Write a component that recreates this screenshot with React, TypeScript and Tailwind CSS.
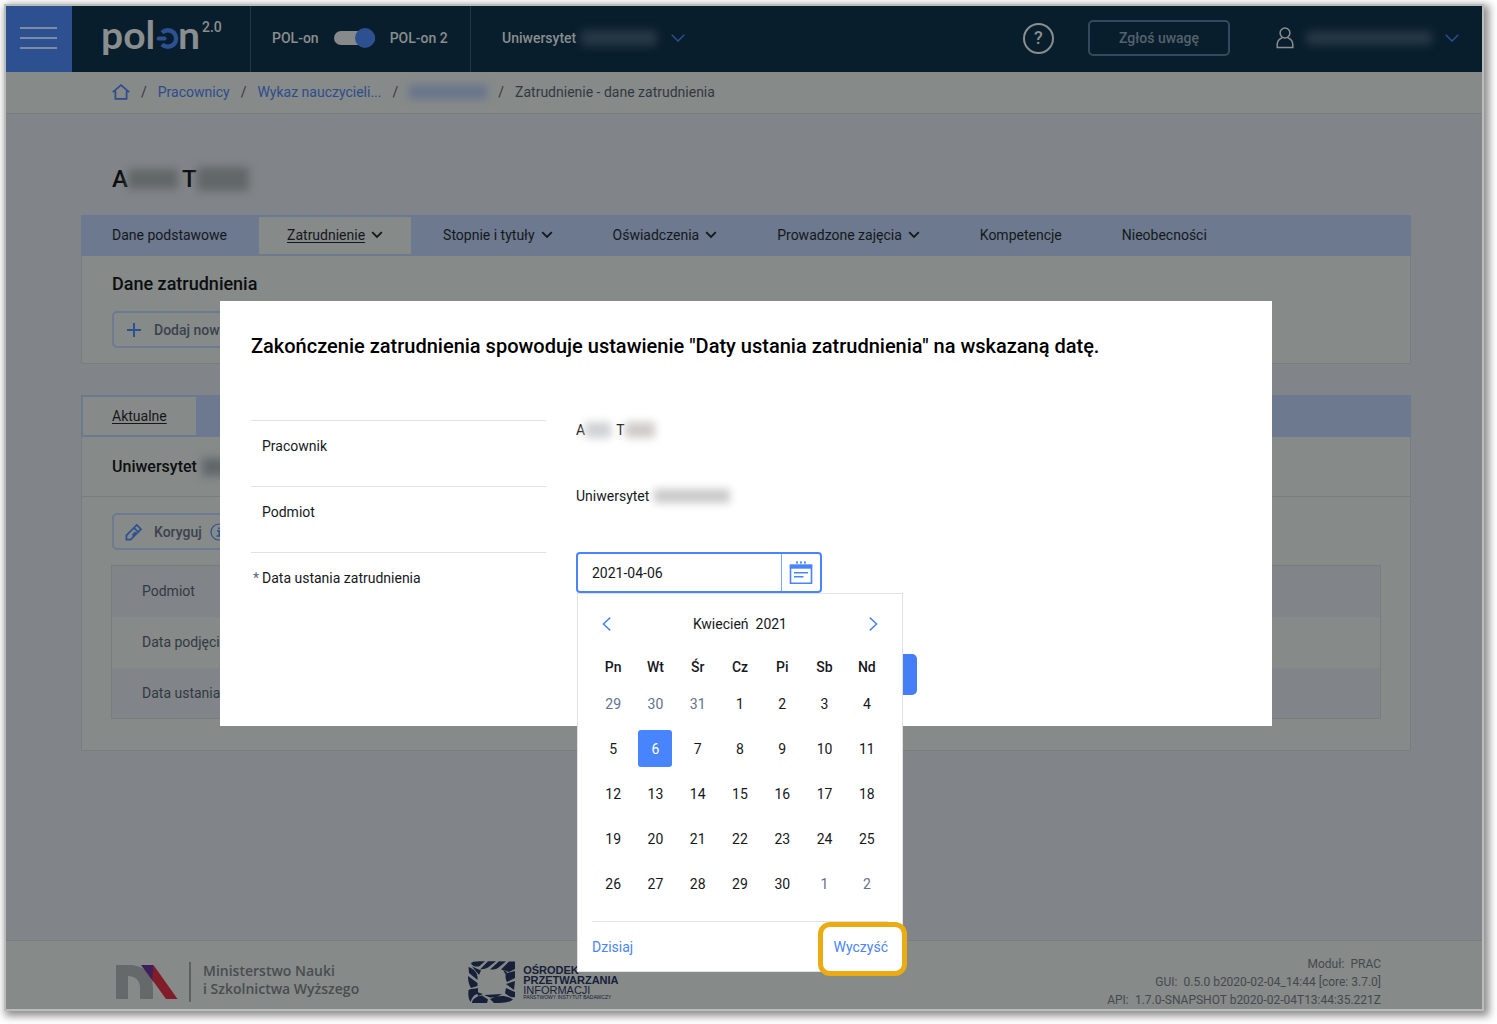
import { useState } from 'react';
import clsx from 'clsx';

const tabs = [
  { label: 'Dane podstawowe', menu: false },
  { label: 'Zatrudnienie', menu: true },
  { label: 'Stopnie i tytuły', menu: true },
  { label: 'Oświadczenia', menu: true },
  { label: 'Prowadzone zajęcia', menu: true },
  { label: 'Kompetencje', menu: false },
  { label: 'Nieobecności', menu: false },
];

const weekDays = ['Pn', 'Wt', 'Śr', 'Cz', 'Pi', 'Sb', 'Nd'];

// April 2021 starts on a Thursday, so three days of March come first
const days = Array.from({ length: 35 }, (_, i) => {
  const n = i - 2;
  if (n < 1) return { day: 31 + n, outside: true };
  if (n > 30) return { day: n - 30, outside: true };
  return { day: n, outside: false };
});

const weeks = [0, 1, 2, 3, 4].map((w) => days.slice(w * 7, w * 7 + 7));

const detailRows = ['Podmiot', 'Data podjęcia', 'Data ustania'];

function Chevron({ className }: { className?: string }) {
  return (
    <svg viewBox="0 0 14 8" className={clsx('h-2 w-[14px] shrink-0', className)} fill="none" stroke="currentColor">
      <path d="M0.7 0.7 7 7 13.3 0.7" strokeWidth="1.4" />
    </svg>
  );
}

function Redacted({ className }: { className?: string }) {
  return <span aria-hidden="true" className={clsx('inline-block shrink-0 blur-[4px]', className)} />;
}

function PolonLogo() {
  return (
    <svg viewBox="-4 -6 128 60" className="h-[60px] w-32" role="img" aria-label="POL-on 2.0">
      <text x="-2" y="35" fontFamily="Lato, sans-serif" fontWeight="700" fontSize="39" fill="#8a8e8f">pol</text>
      <path d="M59 18.6A8.3 8.3 0 1 1 59 30.4" fill="none" stroke="#2d5091" strokeWidth="4.4" />
      <path d="M55.6 24.5H61.5" stroke="#2d5091" strokeWidth="4" strokeLinecap="round" />
      <text x="75" y="35" fontFamily="Lato, sans-serif" fontWeight="700" fontSize="39" fill="#8a8e8f">n</text>
      <text x="99" y="18" fontFamily="Roboto, sans-serif" fontWeight="500" fontSize="14" fill="#8a8e8f">2.0</text>
    </svg>
  );
}

function Header() {
  return (
    <header className="flex h-[66px] items-stretch bg-[#091e2d] font-medium text-[#8a8e8f]">
      <button type="button" aria-label="Menu" className="flex w-[66px] flex-col items-center justify-center gap-[8px] bg-[#2d5091] pr-[2px] pb-[2px]">
        <span className="h-[2px] w-[37px] bg-[#7d8ba5]" />
        <span className="h-[2px] w-[37px] bg-[#7d8ba5]" />
        <span className="h-[2px] w-[37px] bg-[#7d8ba5]" />
      </button>
      <div className="flex w-[179px] items-center border-r border-[#233644] pb-[2px] pl-[27px]">
        <PolonLogo />
      </div>
      <div className="flex w-[220px] items-center gap-[15px] border-r border-[#233644] pb-[2px] pl-[21px]">
        <span>POL-on</span>
        <button type="button" role="switch" aria-checked="true" aria-label="Wersja systemu" className="flex h-[14px] w-[41px] items-center justify-end rounded-full bg-[#868a8b]">
          <span className="size-5 rounded-full bg-[#2d5091]" />
        </button>
        <span>POL-on 2</span>
      </div>
      <button type="button" className="flex items-center pb-[2px] pl-[31px]">
        Uniwersytet
        <Redacted className="ml-[5px] h-4 w-[76px] rounded-sm bg-[#263844]" />
        <Chevron className="ml-[14px] text-[#2d5091]" />
      </button>
      <div className="ml-auto flex items-center pr-[23px] pb-[2px]">
        <button type="button" aria-label="Pomoc" className="size-[31px] rounded-full border-2 border-[#8a8e8f] text-lg leading-none">
          ?
        </button>
        <button type="button" className="ml-[34px] h-9 w-[142px] rounded-[5px] border-2 border-[#35485d] text-[#55626c]">
          Zgłoś uwagę
        </button>
        <button type="button" aria-label="Konto" className="ml-[46px] flex items-center">
          <svg viewBox="0 0 18 22" className="h-[22px] w-[18px]" fill="none" stroke="currentColor" strokeWidth="1.5">
            <circle cx="9" cy="6" r="4.9" />
            <path d="M1.2 20.6V17.5C1.2 14 4 11.6 6.4 10.6M11.6 10.6C14 11.6 16.8 14 16.8 17.5V20.6H0.5" />
          </svg>
          <Redacted className="ml-[12px] h-[14px] w-[126px] rounded-sm bg-[#263844]" />
          <Chevron className="ml-[13px] text-[#2d5091]" />
        </button>
      </div>
    </header>
  );
}

function Breadcrumbs() {
  return (
    <nav aria-label="Okruszki" className="flex h-[42px] items-center gap-[11px] border-b border-[#797d80] bg-[#868a89] pb-[2px] pl-[106px] text-[#32383f]">
      <a href="#" aria-label="Strona główna" className="text-[#2d4c8c]">
        <svg viewBox="0 0 18 16" className="h-4 w-[18px]" fill="none" stroke="currentColor" strokeWidth="1.7">
          <path d="M0.8 8.2 9 1.2 17.2 8.2M3.4 7V14.8H14.6V7" />
        </svg>
      </a>
      <span>/</span>
      <a href="#" className="text-[#2d4c8c]">Pracownicy</a>
      <span>/</span>
      <a href="#" className="text-[#2d4c8c]">Wykaz nauczycieli...</a>
      <span>/</span>
      <Redacted className="h-[14px] w-[78px] bg-[#68748c]" />
      <span>/</span>
      <span>Zatrudnienie - dane zatrudnienia</span>
    </nav>
  );
}

function TabBar() {
  return (
    <div role="tablist" className="flex h-[41px] bg-[#6c798e] pl-px text-[#15181b]">
      {tabs.map((tab) => {
        const active = tab.label === 'Zatrudnienie';
        return (
          <button
            key={tab.label}
            type="button"
            role="tab"
            aria-selected={active}
            className={clsx('flex items-center gap-[6px] border-2 border-[#6c798e] px-[28px] pb-[2px]', active && 'bg-[#868a89]')}
          >
            <span className={clsx(active && 'underline underline-offset-2')}>{tab.label}</span>
            {tab.menu && (
              <svg viewBox="0 0 12 8" className="h-2 w-3" fill="none" stroke="currentColor" strokeWidth="1.8">
                <path d="M1.2 1.2 6 6 10.8 1.2" />
              </svg>
            )}
          </button>
        );
      })}
    </div>
  );
}

function Employment() {
  return (
    <main className="flex-1 pt-[51px] pr-[71px] pl-[75px]">
      <h1 className="flex h-7 items-center pl-[31px] text-2xl font-medium text-[#0c0e10]">
        A
        <Redacted className="h-5 w-[50px] bg-[#62676a]" />
        <span className="ml-[4px]">T</span>
        <Redacted className="h-6 w-[52px] bg-[#62676a]" />
      </h1>

      <section className="mt-[22px]">
        <TabBar />
        <div className="h-[108px] border border-t-0 border-[#797d80] bg-[#868a89] px-[30px] pt-[16px]">
          <h2 className="text-lg leading-6 font-medium text-[#0c0e10]">Dane zatrudnienia</h2>
          <button type="button" className="mt-[15px] flex h-[37px] w-[190px] items-center gap-[12px] rounded-[5px] border-2 border-[#6d7a91] pl-[12px] font-medium text-[#3a434d]">
            <svg viewBox="0 0 16 16" className="size-4 shrink-0" stroke="#2d5091" strokeWidth="2">
              <path d="M8 1V15M1 8H15" />
            </svg>
            Dodaj nowe
          </button>
        </div>
      </section>

      <section className="mt-[31px]">
        <div role="tablist" className="flex h-[42px] bg-[#6c798e] text-[#15181b]">
          <button type="button" role="tab" aria-selected="true" className="border-2 border-[#6c798e] bg-[#868a89] px-[29px] underline underline-offset-2">
            Aktualne
          </button>
        </div>
        <div className="border border-t-0 border-[#797d80] bg-[#868a89] pb-[31px]">
          <h3 className="flex h-[60px] items-center border-b border-[#797d80] pl-[30px] text-base font-medium text-[#0c0e10]">
            Uniwersytet
            <Redacted className="ml-[5px] h-[18px] w-20 bg-[#62676a]" />
          </h3>
          <div className="px-[29px] pt-[16px]">
            <button type="button" className="ml-px flex h-[37px] w-[136px] items-center rounded-[5px] border-2 border-[#6d7a91] pl-[11px] font-medium text-[#3a434d]">
              <svg viewBox="0 0 18 18" className="size-[18px] shrink-0" fill="none" stroke="#2d5091" strokeWidth="1.7">
                <path d="M1.4 16.6V12.4L11.8 2 16 6.2 5.6 16.6ZM9 4.8 13.2 9M10.6 9.2 7.4 12.4" />
              </svg>
              <span className="ml-[11px]">Koryguj</span>
              <svg viewBox="0 0 18 18" className="ml-[8px] size-[18px] shrink-0" fill="none" stroke="#2d5091">
                <circle cx="9" cy="9" r="8" strokeWidth="1.2" />
                <path d="M9 4.5V6.2M7 8H9.4V13M6.6 13H11.8" strokeWidth="1.7" />
              </svg>
            </button>
            <table className="mt-[15px] w-full border-collapse border border-[#797d80] text-left text-[#323941]">
              <tbody>
                {detailRows.map((row) => (
                  <tr key={row} className="h-[51px] odd:bg-[#818589]">
                    <th scope="row" className="px-[30px] py-0 font-normal">{row}</th>
                  </tr>
                ))}
              </tbody>
            </table>
          </div>
        </div>
      </section>
    </main>
  );
}

function Footer() {
  return (
    <footer className="flex items-start border-t border-[#797d80] bg-[#868a89] pr-[101px] pl-[110px]">
      <div className="flex items-center pt-[21px]">
        <svg viewBox="0 0 62 34" className="h-[34px] w-[62px]" aria-hidden="true">
          <path d="M0 0H13C28 0 37 9 37 23V34H24V23C24 15 19 11 12 11V34H0Z" fill="#656969" />
          <path d="M25 0H37.5V17Z" fill="#3e1f58" />
          <path d="M37.5 0 61.5 34H50L36 14.5Z" fill="#801d28" />
        </svg>
        <div className="ml-[11px] border-l-2 border-[#5b6061] pb-[4px] pl-[12px] font-[Open_Sans,sans-serif] leading-[18px] font-semibold text-[#484d4e]">
          Ministerstwo Nauki
          <br />
          i Szkolnictwa Wyższego
        </div>
      </div>
      <div className="ml-[109px] flex items-start gap-[8px] pt-[20px] text-[#172038]">
        <svg viewBox="0 0 47 42" className="h-[42px] w-[47px]" fill="currentColor" aria-hidden="true">
          <path d="M3 2C6 0 12 0.5 17 0.3L11 5.5C7 6 4 5 3 2ZM20 0.3H28L20 6.5C17 8.5 14 8 12 8.5ZM31 0.3 38 0.5 30 7C27 9 24 8.5 22 8.5ZM41 0.5H47V8L41 11C36 9 34 9 33 8.5Z" />
          <path d="M47 10V17L39 21C37 17 37 13 39 12ZM47 20 46 29 38 23ZM47 31V36C43 37 39 34 37 32L38 27Z" />
          <path d="M45 38.5C41 42 33 42 26 42L22 38C30 34 38 34 45 38.5ZM19 42H4C4 38 9 35 14 34.5L20 38.5ZM16 34 34 33C31 35.5 26 36.5 22 36.5Z" />
          <path d="M0.5 6C6 8 9 11 9.5 16V19L1 12ZM0 15 9.5 22V25L3 27C1 24 0 20 0 15ZM0.5 29C4 27 7 28 10 27V33C6 33 4 37 2.5 41C0.5 38 0 34 0.5 29Z" />
          <path d="M4 5.5 13 9.5 11 14ZM9 31 15 33 10 35ZM35 9 39 11 38 14Z" />
        </svg>
        <div className="pt-[4px] font-[Liberation_Sans,sans-serif] text-[11px] leading-[10px]">
          <div className="font-bold">OŚRODEK</div>
          <div className="font-bold">PRZETWARZANIA</div>
          <div>INFORMACJI</div>
          <div className="text-[5px] leading-[5px]">PAŃSTWOWY INSTYTUT BADAWCZY</div>
        </div>
      </div>
      <div className="ml-auto pt-[14px] text-right text-xs leading-[18px] text-[#44494d]">
        <div>Moduł:&ensp;PRAC</div>
        <div>GUI:&ensp;0.5.0 b2020-02-04_14:44 [core: 3.7.0]</div>
        <div>API:&ensp;1.7.0-SNAPSHOT b2020-02-04T13:44:35.221Z</div>
      </div>
    </footer>
  );
}

interface CalendarProps {
  selected: number | null;
  onSelect: (day: number | null) => void;
}

function Calendar({ selected, onSelect }: CalendarProps) {
  return (
    <div className="w-[326px] border border-[#e2e2e4] bg-white px-[14px]">
      <div className="flex h-[59px] items-center justify-between px-[10px]">
        <button type="button" aria-label="Poprzedni miesiąc" className="text-[#4984ff]">
          <svg viewBox="0 0 9 14" className="h-[14px] w-[9px]" fill="none" stroke="currentColor" strokeWidth="1.5">
            <path d="M8.2 0.6 1.4 7 8.2 13.4" />
          </svg>
        </button>
        <span>Kwiecień&nbsp; 2021</span>
        <button type="button" aria-label="Następny miesiąc" className="text-[#4984ff]">
          <svg viewBox="0 0 9 14" className="h-[14px] w-[9px]" fill="none" stroke="currentColor" strokeWidth="1.5">
            <path d="M0.8 0.6 7.6 7 0.8 13.4" />
          </svg>
        </button>
      </div>
      <table className="w-full table-fixed text-center">
        <thead>
          <tr className="h-[28px]">
            {weekDays.map((d) => (
              <th key={d} scope="col" className="p-0 font-medium">{d}</th>
            ))}
          </tr>
        </thead>
        <tbody>
          {weeks.map((week, i) => (
            <tr key={i} className="h-[45px]">
              {week.map(({ day, outside }) => (
                <td key={day} className="p-0">
                  <button
                    type="button"
                    onClick={() => onSelect(day)}
                    className={clsx(
                      'h-[37px] w-[34px] rounded-[3px]',
                      outside && 'text-[#65718a]',
                      !outside && day === selected && 'bg-[#4984ff] text-white'
                    )}
                  >
                    {day}
                  </button>
                </td>
              ))}
            </tr>
          ))}
        </tbody>
      </table>
      <div className="mt-[15px] flex h-[50px] items-center justify-between border-t border-[#e2e2e4] text-[#4984ff]">
        <button type="button">Dzisiaj</button>
        <div className="relative">
          <button type="button" onClick={() => onSelect(null)}>Wyczyść</button>
          <span className="pointer-events-none absolute -top-[15px] -right-[19px] -bottom-[19px] -left-[16px] rounded-[12px] border-[5px] border-[#ebab13]" />
        </div>
      </div>
    </div>
  );
}

function EndEmploymentDialog() {
  const [day, setDay] = useState<number | null>(6);
  const value = day === null ? '' : `2021-04-${String(day).padStart(2, '0')}`;

  return (
    <div className="absolute inset-0 flex items-start justify-center pt-[295px] pl-[4px]">
      <div role="dialog" aria-labelledby="dialog-title" className="w-full max-w-[1052px] bg-white px-[31px] pt-[30px] pb-[31px] text-[#16181c]">
        <h2 id="dialog-title" className="text-xl leading-[30px] font-medium text-black">
          Zakończenie zatrudnienia spowoduje ustawienie "Daty ustania zatrudnienia" na wskazaną datę.
        </h2>
        <div className="mt-[59px] grid grid-cols-[295px_1fr] gap-x-[30px] leading-5">
          <div className="h-[66px] border-t border-[#e2e2e4] pt-[15px] pl-[11px]">Pracownik</div>
          <div className="flex h-5 items-center">
            A
            <Redacted className="h-4 w-[26px] bg-[#cfd1d2]" />
            <span className="ml-[5px]">T</span>
            <Redacted className="h-4 w-[30px] bg-[#cfcbca]" />
          </div>
          <div className="h-[66px] border-t border-[#e2e2e4] pt-[15px] pl-[11px]">Podmiot</div>
          <div className="flex h-5 items-center">
            Uniwersytet
            <Redacted className="ml-[5px] h-[14px] w-[76px] bg-[#c9c9c9]" />
          </div>
          <div className="flex h-[66px] border-t border-[#e2e2e4] pt-[15px] pl-[2px]">
            <span className="w-[9px] text-[#5a6883]">*</span>
            <label htmlFor="end-date">Data ustania zatrudnienia</label>
          </div>
          <div className="relative flex h-[41px] w-[246px] rounded-[4px] border-2 border-[#4984ff] bg-white">
            <input
              id="end-date"
              type="text"
              value={value}
              readOnly
              className="min-w-0 flex-1 bg-transparent pl-[14px] outline-none"
            />
            <button type="button" aria-label="Kalendarz" className="flex w-[39px] items-center justify-center border-l border-[#7ea8ff]">
              <svg viewBox="0 0 24 24" className="size-6" fill="none" stroke="#4984ff">
                <path d="M1.5 4V22.2H22.5V4" strokeWidth="1.6" />
                <path d="M0.8 5.5H23.2" strokeWidth="4.4" />
                <path d="M7.5 0.4 8.4 2.6M11.5 0.4 12.4 2.6M15.5 0.4 16.4 2.6" strokeWidth="1.6" />
                <path d="M5 11.8H19M5 15.8H14.5" strokeWidth="1.6" />
              </svg>
            </button>
            <div className="absolute top-[39px] -left-px z-10">
              <Calendar selected={day} onSelect={setDay} />
            </div>
          </div>
        </div>
        <div className="mt-[36px] flex w-[666px] justify-end">
          <button type="button" aria-label="Zakończ" className="h-[41px] w-[160px] rounded-[5px] bg-[#457ef6]" />
        </div>
      </div>
    </div>
  );
}

export default function App() {
  return (
    <div className="flex min-h-screen flex-col bg-white pt-1 pr-[13px] pb-[13px] pl-1 font-[Roboto,sans-serif] text-sm leading-5">
      <div className="relative flex flex-1 flex-col border-2 border-[#bbbdbd] bg-[#818589] shadow-[3px_3px_8px_2px_rgba(0,0,0,0.45)]">
        <Header />
        <Breadcrumbs />
        <Employment />
        <Footer />
        <EndEmploymentDialog />
      </div>
    </div>
  );
}
